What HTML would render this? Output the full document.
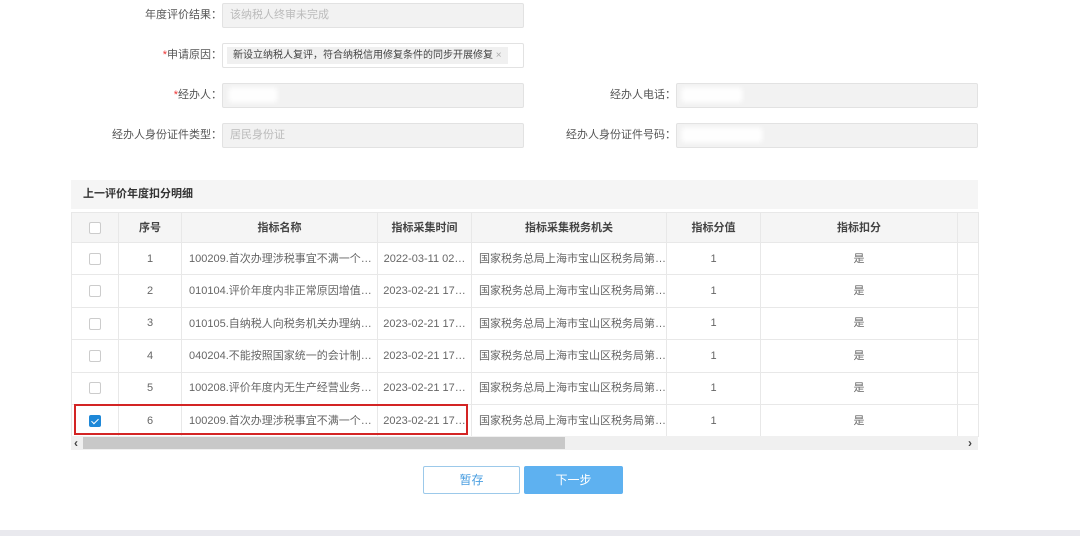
<!DOCTYPE html>
<html><head><meta charset="utf-8"><style>
*{box-sizing:border-box;margin:0;padding:0}
body{width:1080px;height:536px;background:#fff;font-family:"Liberation Sans","Noto Sans CJK SC",sans-serif;font-size:11px;color:#555;position:relative;overflow:hidden}
.a{position:absolute}
.lbl{text-align:right;width:204px;color:#555;line-height:24px}
.lbl i{color:#e33;font-style:normal}
.inp{background:#f2f2f2;border:1px solid #e2e2e2;border-radius:2px;height:25px;line-height:23px;padding-left:7px;color:#bbb}
.blur{background:#fff;opacity:.95;filter:blur(2px);height:14px}
table{border-collapse:collapse;position:absolute;left:71px;top:212px;table-layout:fixed}
td,th{border:1px solid #e8e8e8;text-align:center;height:32.4px;white-space:nowrap;overflow:hidden;color:#666;font-weight:normal;vertical-align:middle;line-height:14px;padding:0}
td span.t{display:inline-block;vertical-align:middle;line-height:14px}
th{background:#f5f5f5;color:#444;font-weight:bold;height:30px}
td.l{text-align:left;padding-left:7px}
.cb{display:inline-block;width:12px;height:12px;border:1px solid #ccc;border-radius:2px;background:#fff;vertical-align:middle}
.cb.on{background:#1e88d8;border-color:#1e88d8;position:relative}
.cb.on:after{content:"";position:absolute;left:3px;top:1px;width:3px;height:6px;border:solid #fff;border-width:0 1.5px 1.5px 0;transform:rotate(45deg)}
</style></head><body>
<div class="a lbl" style="left:18px;top:3px">年度评价结果：</div>
<div class="a inp" style="left:222px;top:3px;width:302px">该纳税人终审未完成</div>
<div class="a lbl" style="left:18px;top:43px"><i>*</i>申请原因：</div>
<div class="a inp" style="left:222px;top:43px;width:302px;background:#fff;padding-left:4px"><span style="display:inline-block;background:#f0f0f0;color:#444;font-size:10px;line-height:17px;padding:0 6px;margin-top:3px">新设立纳税人复评，符合纳税信用修复条件的同步开展修复 <span style="color:#aaa">×</span></span></div>
<div class="a lbl" style="left:18px;top:83px"><i>*</i>经办人：</div>
<div class="a inp" style="left:222px;top:83px;width:302px"></div>
<div class="a blur" style="left:229px;top:88px;width:48px"></div>
<div class="a lbl" style="left:18px;top:123px">经办人身份证件类型：</div>
<div class="a inp" style="left:222px;top:123px;width:302px">居民身份证</div>
<div class="a lbl" style="left:472px;top:83px">经办人电话：</div>
<div class="a inp" style="left:676px;top:83px;width:302px"></div>
<div class="a blur" style="left:682px;top:88px;width:60px"></div>
<div class="a lbl" style="left:472px;top:123px">经办人身份证件号码：</div>
<div class="a inp" style="left:676px;top:123px;width:302px"></div>
<div class="a blur" style="left:682px;top:128px;width:80px"></div>
<div class="a" style="left:71px;top:180px;width:907px;height:29px;background:#f5f5f5;font-weight:bold;color:#333;line-height:29px;padding-left:12px">上一评价年度扣分明细</div>
<table>
<colgroup><col style="width:47px"><col style="width:63px"><col style="width:196px"><col style="width:94px"><col style="width:195px"><col style="width:94px"><col style="width:197px"><col style="width:21px"></colgroup>
<tr><th><span class="cb"></span></th><th>序号</th><th>指标名称</th><th>指标采集时间</th><th>指标采集税务机关</th><th>指标分值</th><th>指标扣分</th><th></th></tr>
<tr><td><span class="cb"></span></td><td>1</td><td class="l"><span class="t">100209.首次办理涉税事宜不满一个…</span></td><td><span class="t">2022-03-11 02…</span></td><td class="l"><span class="t">国家税务总局上海市宝山区税务局第…</span></td><td>1</td><td>是</td><td></td></tr>
<tr><td><span class="cb"></span></td><td>2</td><td class="l"><span class="t">010104.评价年度内非正常原因增值…</span></td><td><span class="t">2023-02-21 17…</span></td><td class="l"><span class="t">国家税务总局上海市宝山区税务局第…</span></td><td>1</td><td>是</td><td></td></tr>
<tr><td><span class="cb"></span></td><td>3</td><td class="l"><span class="t">010105.自纳税人向税务机关办理纳…</span></td><td><span class="t">2023-02-21 17…</span></td><td class="l"><span class="t">国家税务总局上海市宝山区税务局第…</span></td><td>1</td><td>是</td><td></td></tr>
<tr><td><span class="cb"></span></td><td>4</td><td class="l"><span class="t">040204.不能按照国家统一的会计制…</span></td><td><span class="t">2023-02-21 17…</span></td><td class="l"><span class="t">国家税务总局上海市宝山区税务局第…</span></td><td>1</td><td>是</td><td></td></tr>
<tr><td><span class="cb"></span></td><td>5</td><td class="l"><span class="t">100208.评价年度内无生产经营业务…</span></td><td><span class="t">2023-02-21 17…</span></td><td class="l"><span class="t">国家税务总局上海市宝山区税务局第…</span></td><td>1</td><td>是</td><td></td></tr>
<tr><td><span class="cb on"></span></td><td>6</td><td class="l"><span class="t">100209.首次办理涉税事宜不满一个…</span></td><td><span class="t">2023-02-21 17…</span></td><td class="l"><span class="t">国家税务总局上海市宝山区税务局第…</span></td><td>1</td><td>是</td><td></td></tr>
</table>
<div class="a" style="left:74px;top:404px;width:394px;height:31px;border:2px solid #d32424"></div>
<div class="a" style="left:71px;top:436px;width:907px;height:14px;background:#f0f0f0"></div>
<div class="a" style="left:83px;top:437px;width:482px;height:12px;background:#c8c8c8"></div>
<div class="a" style="left:74px;top:437px;font-size:12px;line-height:12px;color:#444;font-weight:bold">‹</div>
<div class="a" style="left:968px;top:437px;font-size:12px;line-height:12px;color:#444;font-weight:bold">›</div>
<div class="a" style="left:423px;top:466px;width:97px;height:28px;border:1px solid #9cc9ea;color:#4a9ee0;text-align:center;line-height:26px;font-size:12px;border-radius:2px">暂存</div>
<div class="a" style="left:524px;top:466px;width:99px;height:28px;background:#5eb1f0;color:#fff;text-align:center;line-height:28px;font-size:12px;border-radius:2px">下一步</div>
<div class="a" style="left:0;top:530px;width:1080px;height:6px;background:#e9e9ee"></div>
</body></html>
